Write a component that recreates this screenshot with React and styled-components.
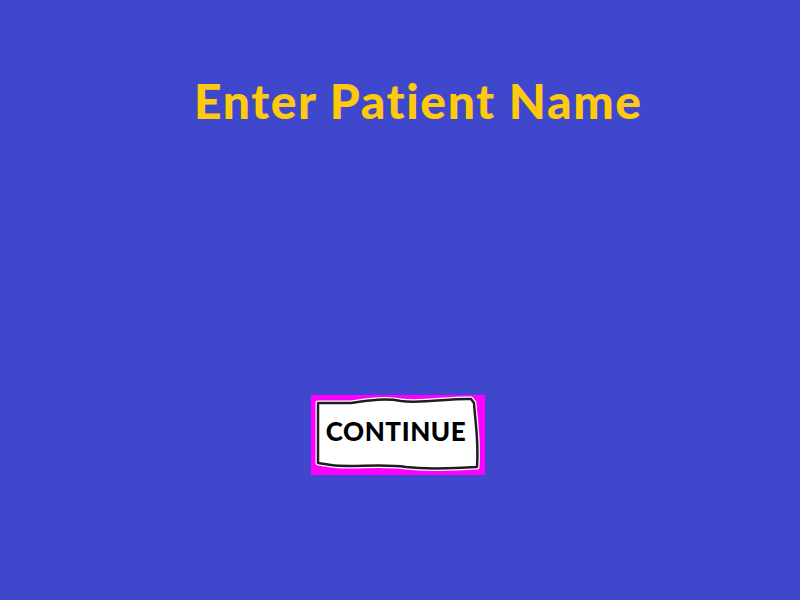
import React from "react";
import styled, { createGlobalStyle } from "styled-components";

const GlobalStyle = createGlobalStyle`
  html, body {
    margin: 0;
    padding: 0;
    background: #3f48cc;
  }
  #root {
    height: 600px;
  }
`;

const Screen = styled.div`
  width: 800px;
  height: 600px;
  background: #3f48cc;
  display: flex;
  flex-direction: column;
  overflow: hidden;
`;

const Title = styled.h1`
  margin: 0;
  padding: 75px 0 0 194px;
  font-family: "Lato", "Open Sans", sans-serif;
  font-weight: 900;
  font-size: 48px;
  line-height: 52px;
  letter-spacing: 1.6px;
  font-variant-ligatures: none;
  color: #ffc90e;
  white-space: nowrap;
`;

const ButtonRow = styled.div`
  display: flex;
  padding: 268px 0 0 311px;
`;

const Frame = styled.button`
  position: relative;
  width: 174px;
  height: 80px;
  padding: 0;
  border: none;
  background: #ff00ff;
  cursor: pointer;
  display: flex;
  align-items: center;
  justify-content: center;
`;

const Paper = styled.svg`
  position: absolute;
  left: 0;
  top: 0;
`;

const Label = styled.span`
  position: relative;
  font-family: "Lato", "Open Sans", sans-serif;
  font-weight: 900;
  font-size: 26px;
  letter-spacing: 0.6px;
  font-variant-ligatures: none;
  color: #000;
  margin-top: -9px;
  margin-left: -4px;
`;

const edge =
  "M7 8 L40 8 C60 5 75 3 90 6 C110 9 140 3 160 4 L163 8 C164 25 168 45 166 72 C140 73 120 75 95 72 C70 68 40 73 20 70 L7 68 Z";

const PaperShape = () => (
  <Paper width="174" height="80" viewBox="0 0 174 80">
    <path d={edge} fill="#ffffff" stroke="#ffffff" strokeWidth="5" strokeLinejoin="round" />
    <path d={edge} fill="#ffffff" stroke="#1e1e1e" strokeWidth="2.5" strokeLinejoin="round" />
  </Paper>
);

export default function App() {
  return (
    <Screen>
      <GlobalStyle />
      <Title>Enter Patient Name</Title>
      <ButtonRow>
        <Frame>
          <PaperShape />
          <Label>CONTINUE</Label>
        </Frame>
      </ButtonRow>
    </Screen>
  );
}
